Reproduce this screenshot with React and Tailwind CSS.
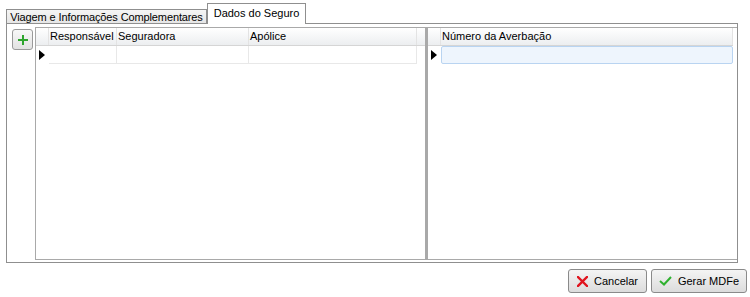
import React from "react";

const font = { fontFamily: '"Liberation Sans", Arial, sans-serif' };

function Tri() {
  return (
    <svg width="6" height="10" viewBox="0 0 6 10">
      <path d="M0 0 L6 5 L0 10 Z" fill="#000" />
    </svg>
  );
}

export default function App() {
  return (
    <div className="w-[750px] h-[297px] bg-white text-[11px] text-black relative" style={font}>
      {/* tabs */}
      <div className="flex items-end h-[23px] pl-[6px]">
        <div className="h-[14px] w-[201px] flex items-center justify-center border border-b-0 border-[#8f8f8f] bg-gradient-to-b from-[#f5f5f5] to-[#e6e6e6] leading-none pt-[1px] whitespace-nowrap tracking-[-0.12px]">
          Viagem e Informações Complementares
        </div>
        <div className="h-[21px] w-[99px] flex items-start justify-center pt-[4px] border border-b-0 border-[#8f8f8f] bg-white -mb-px relative z-10 leading-none">
          Dados do Seguro
        </div>
      </div>
      {/* panel */}
      <div className="ml-[6px] w-[732px] h-[240px] border border-[#8f8f8f] flex">
        <div className="w-[28px] shrink-0 pl-[5px] pt-[5px]">
          <div className="w-[21px] h-[21px] rounded-[3px] border border-[#9a9a9a] bg-gradient-to-b from-[#f8f8f8] to-[#e2e2e2] flex items-center justify-center">
            <svg width="10" height="10" viewBox="0 0 10 10">
              <rect x="4" y="0" width="2" height="10" fill="#2ea52e" />
              <rect x="0" y="4" width="10" height="2" fill="#2ea52e" />
            </svg>
          </div>
        </div>
        <div className="flex flex-1 pt-[3px] pb-[2px]">
          {/* left grid */}
          <div className="w-[391px] border border-[#a9a9a9] flex flex-col">
            <div className="flex h-[18px] bg-gradient-to-b from-[#ffffff] to-[#eceef0] border-b border-[#d5d5d5]">
              <div className="w-[13px] border-r border-[#e3e3e3]" />
              <div className="w-[68px] border-r border-[#e3e3e3] pl-[1px] flex items-center">Responsável</div>
              <div className="w-[132px] border-r border-[#e3e3e3] pl-[1px] flex items-center">Seguradora</div>
              <div className="w-[168px] border-r border-[#e3e3e3] pl-[1px] flex items-center">Apólice</div>
            </div>
            <div className="flex h-[18px]">
              <div className="w-[13px] flex items-center pl-[3px]"><Tri /></div>
              <div className="w-[68px] border-r border-b border-[#e8e8e8]" />
              <div className="w-[132px] border-r border-b border-[#e8e8e8]" />
              <div className="w-[168px] border-r border-b border-[#e8e8e8]" />
            </div>
          </div>
          <div className="w-[1px] bg-[#a9a9a9]" />
          {/* right grid */}
          <div className="flex-1 border border-[#a9a9a9] border-r-0 flex flex-col">
            <div className="flex h-[18px] bg-gradient-to-b from-[#ffffff] to-[#eceef0] border-b border-[#d5d5d5] mr-[4px]">
              <div className="w-[13px] border-r border-[#e3e3e3]" />
              <div className="flex-1 border-r border-[#e3e3e3] pl-[1px] flex items-center">Número da Averbação</div>
            </div>
            <div className="flex h-[18px] mr-[4px]">
              <div className="w-[13px] flex items-center pl-[3px]"><Tri /></div>
              <div className="flex-1 rounded-[2px] border border-[#b9d4f1] bg-[#eef5fd]" />
            </div>
          </div>
        </div>
      </div>
      {/* buttons */}
      <div className="flex justify-end gap-[4px] pr-[3px] pt-[6px]">
        <div className="w-[79px] h-[24px] rounded-[3px] border border-[#8a8a8a] bg-gradient-to-b from-[#f4f4f4] to-[#dcdcdc] flex items-center justify-center gap-[6px]">
          <svg width="11" height="11" viewBox="0 0 11 11">
            <path d="M1 1 L10 10 M10 1 L1 10" stroke="#e0141e" strokeWidth="2.4" strokeLinecap="square" />
          </svg>
          <span>Cancelar</span>
        </div>
        <div className="w-[96px] h-[24px] rounded-[3px] border border-[#8a8a8a] bg-gradient-to-b from-[#f4f4f4] to-[#dcdcdc] flex items-center justify-center gap-[6px]">
          <svg width="13" height="10" viewBox="0 0 13 10">
            <path d="M1 5 L5 8.5 L12 1" stroke="#2fb12f" strokeWidth="2" fill="none" />
          </svg>
          <span>Gerar MDFe</span>
        </div>
      </div>
    </div>
  );
}
